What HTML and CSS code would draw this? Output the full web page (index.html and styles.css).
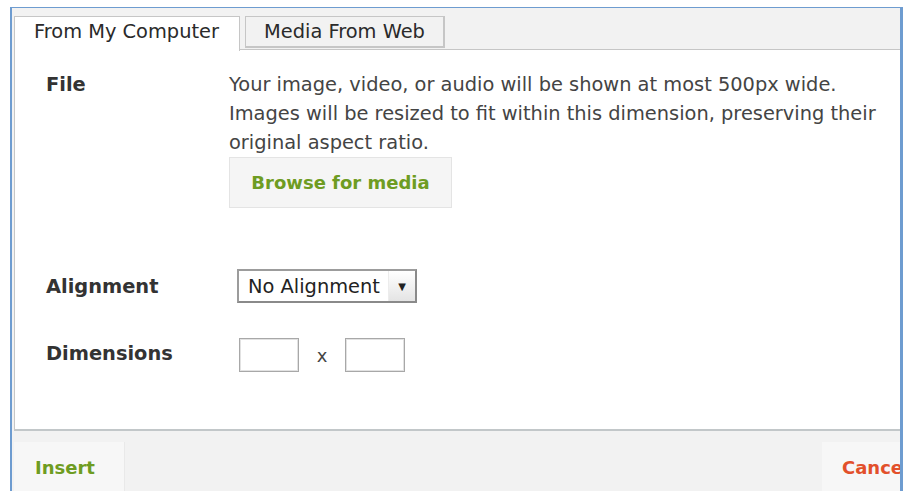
FILE: index.html
```html
<!DOCTYPE html>
<html lang="en">
<head>
<meta charset="utf-8">
<title>Insert media</title>
<link rel="stylesheet" href="styles.css">
</head>
<body>
<div class="dialog">
  <div class="tabs">
    <div class="tab tab-active">From My Computer</div>
    <div class="tab">Media From Web</div>
  </div>
  <div class="pane">
    <div class="row row-file">
      <div class="label">File</div>
      <div class="value">
        <p class="hint">Your image, video, or audio will be shown at most 500px wide. Images will be resized to fit within this dimension, preserving their original aspect ratio.</p>
        <button class="browse" type="button">Browse for media</button>
      </div>
    </div>
    <div class="row row-align">
      <div class="label">Alignment</div>
      <div class="value">
        <div class="select">
          <span class="select-text">No Alignment</span>
          <span class="select-arrow">&#9660;</span>
        </div>
      </div>
    </div>
    <div class="row row-dims">
      <div class="label">Dimensions</div>
      <div class="value dims">
        <span class="box"></span>
        <span class="times">x</span>
        <span class="box"></span>
      </div>
    </div>
  </div>
  <div class="footer">
    <button class="action insert" type="button">Insert</button>
    <button class="action cancel" type="button">Cancel</button>
  </div>
</div>
</body>
</html>
```

FILE: styles.css
```css
html, body {
  margin: 0;
  padding: 0;
  background: #ffffff;
}

body {
  font-family: "DejaVu Sans", Verdana, sans-serif;
  color: #3a3a3a;
  font-size: 19.4px;
}

.dialog {
  margin: 7px 0 0 10px;
  width: 888px;
  height: 484px;
  background: #f2f2f2;
  border-top: 1px solid #6e9cd0;
  border-left: 2px solid #6e9cd0;
  border-right: 3px solid #6e9cd0;
  overflow: hidden;
  display: flex;
  flex-direction: column;
}

/* tab strip */
.tabs {
  display: flex;
  align-items: flex-start;
  padding: 8px 0 0 2px;
  height: 33px;
  flex: none;
}

.tab {
  box-sizing: border-box;
  height: 32px;
  width: 200px;
  margin-left: 5px;
  border: 1px solid #c6c6c6;
  border-right-width: 2px;
  border-bottom-width: 2px;
  background: #f2f2f2;
  color: #2a2a2a;
  font-size: 19.4px;
  line-height: 30px;
  text-align: center;
  white-space: nowrap;
}

.tab-active {
  width: 226px;
  height: 35px;
  margin-left: 0;
  background: #ffffff;
  border-right-width: 1px;
  border-bottom: none;
  position: relative;
  z-index: 1;
  text-align: left;
  padding-left: 19px;
}

/* white content pane */
.pane {
  box-sizing: border-box;
  height: 382px;
  flex: none;
  margin-left: 2px;
  background: #ffffff;
  border-top: 1px solid #c6c6c6;
  border-left: 1px solid #c6c6c6;
  border-bottom: 2px solid #c2c7c9;
  padding: 20px 0 0 31px;
}

.row {
  display: grid;
  grid-template-columns: 183px 1fr;
  align-items: center;
}

.label {
  font-weight: bold;
  color: #333333;
}

.row-file {
  align-items: start;
}

.row-file .label {
  line-height: 29px;
}

.hint {
  margin: 0;
  max-width: 668px;
  line-height: 29px;
  color: #444444;
}

.browse {
  display: block;
  box-sizing: border-box;
  width: 223px;
  height: 51px;
  margin: 0;
  background: #f5f5f5;
  border: 1px solid #e4e4e4;
  color: #6e9c22;
  font-family: "DejaVu Sans", Verdana, sans-serif;
  font-weight: bold;
  font-size: 18px;
  padding: 0;
}

.row-align {
  margin-top: 61px;
}

.select {
  box-sizing: border-box;
  display: flex;
  align-items: center;
  width: 180px;
  height: 34px;
  margin-left: 8px;
  border: 2px solid #9c9c9c;
  border-right-color: #8a8a8a;
  border-bottom-color: #8a8a8a;
  background: #ffffff;
}

.select-text {
  flex: 1;
  padding-left: 9px;
  color: #222222;
  font-size: 19.4px;
  white-space: nowrap;
}

.select-arrow {
  align-self: stretch;
  width: 26px;
  flex: none;
  display: flex;
  align-items: center;
  justify-content: center;
  font-size: 10px;
  color: #222222;
  background: linear-gradient(#ffffff, #e4e4e4);
  border-left: 1px solid #ececec;
}

.row-dims {
  margin-top: 35px;
}

.row-dims .label {
  margin-top: -4px;
}

.dims {
  display: flex;
  align-items: center;
  padding-left: 10px;
}

.box {
  box-sizing: border-box;
  width: 60px;
  height: 34px;
  border: 1px solid #a8a8a8;
  box-shadow: inset 0 0 0 1px #e2e2e2;
  background: #ffffff;
}

.times {
  width: 46px;
  text-align: center;
  color: #444444;
  font-size: 18px;
}

/* bottom action bar */
.footer {
  flex: 1;
  display: flex;
  justify-content: space-between;
  align-items: flex-end;
  padding-left: 2px;
}

.action {
  box-sizing: border-box;
  height: 50px;
  width: 110px;
  margin: 0;
  border: none;
  background: #f7f7f7;
  font-family: "DejaVu Sans", Verdana, sans-serif;
  font-weight: bold;
  font-size: 18px;
  text-align: left;
  padding: 0 0 0 21px;
  box-shadow: 1px 0 0 #e9e9e9;
  white-space: nowrap;
}

.insert {
  color: #6e9c22;
}

.cancel {
  color: #e2502b;
  margin-right: -32px;
  padding-left: 20px;
}
```
